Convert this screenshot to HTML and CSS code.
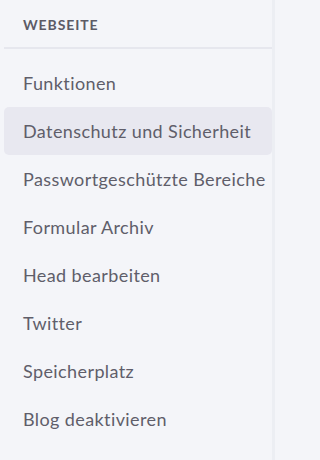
FILE: index.html
```html
<!DOCTYPE html>
<html lang="de">
<head>
<meta charset="utf-8">
<link rel="stylesheet" href="styles.css">
</head>
<body>
<nav class="sidebar">
  <div class="section-title">WEBSEITE</div>
  <ul class="menu">
    <li class="item">Funktionen</li>
    <li class="item active">Datenschutz und Sicherheit</li>
    <li class="item">Passwortgeschützte Bereiche</li>
    <li class="item">Formular Archiv</li>
    <li class="item">Head bearbeiten</li>
    <li class="item">Twitter</li>
    <li class="item">Speicherplatz</li>
    <li class="item">Blog deaktivieren</li>
  </ul>
</nav>
</body>
</html>
```

FILE: styles.css
```css
html, body {
  margin: 0;
  padding: 0;
  background: #f4f5f9;
}
body {
  width: 275px;
  height: 460px;
  overflow: hidden;
  font-family: Lato, "Open Sans", sans-serif;
}
.sidebar {
  box-sizing: border-box;
  width: 275px;
  height: 460px;
  padding: 0 0 0 4px;
  border-right: 3px solid #eceef3;
}
.section-title {
  font-size: 14px;
  font-weight: 700;
  color: #5c5b66;
  letter-spacing: 0.9px;
  padding: 16px 0 0 19px;
  height: 31px;
  border-bottom: 2px solid #e6e7ee;
}
.menu {
  list-style: none;
  margin: 0;
  padding: 10px 0 0;
}
.item {
  height: 48px;
  line-height: 48px;
  padding-left: 19px;
  font-size: 18px;
  letter-spacing: 0.4px;
  color: #5f5e6a;
  border-radius: 5px;
  white-space: nowrap;
}
.item.active {
  background: #e8e8f0;
}
```
